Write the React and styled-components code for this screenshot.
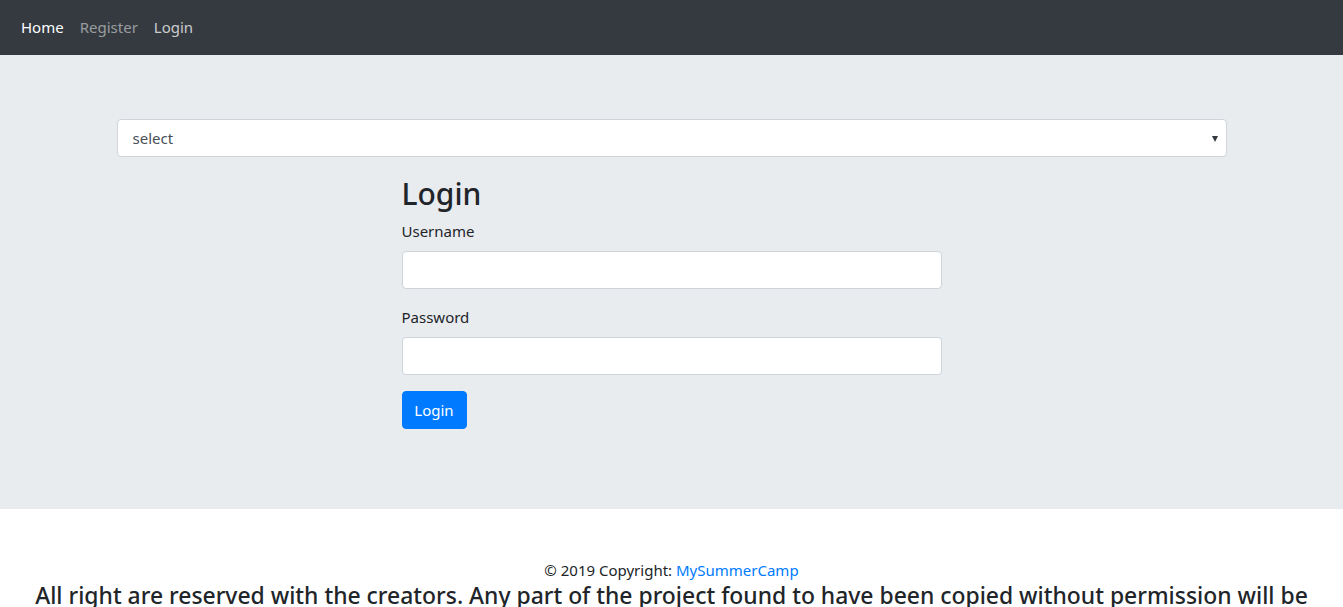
import React from "react";
import styled, { createGlobalStyle } from "styled-components";

const Global = createGlobalStyle`
  html, body { margin: 0; padding: 0; }
  body {
    font-family: "Noto Sans", "Open Sans", sans-serif;
    font-size: 15px;
    line-height: 1.5;
    color: #212529;
    background: #fff;
  }
  * { box-sizing: border-box; }
`;

const Navbar = styled.nav`
  background: #343a40;
  height: 55px;
  display: flex;
  align-items: center;
  padding: 0 13px;
`;

const NavLink = styled.a`
  padding: 0 8px;
  font-size: 15px;
  text-decoration: none;
  color: ${(p) =>
    p.$state === "active"
      ? "#fff"
      : p.$state === "hover"
      ? "rgba(255,255,255,.75)"
      : "rgba(255,255,255,.5)"};
`;

const Jumbotron = styled.section`
  background: #e9ecef;
  padding: 64px 0 80px;
`;

const Container = styled.div`
  width: 1110px;
  margin: 0 auto;
  display: flex;
  flex-direction: column;
`;

const Select = styled.div`
  height: 38px;
  background: #fff;
  border: 1px solid #ced4da;
  border-radius: 4px;
  display: flex;
  align-items: center;
  justify-content: space-between;
  padding: 1px 8px 0 15px;
  color: #495057;
  font-size: 15px;
`;

const Caret = styled.span`
  width: 0;
  height: 0;
  border-left: 3.5px solid transparent;
  border-right: 3.5px solid transparent;
  border-top: 6px solid #343a40;
`;

const FormCol = styled.form`
  width: 540px;
  margin: 19px 0 0 285px;
  display: flex;
  flex-direction: column;
`;

const Title = styled.h2`
  margin: 0 0 7px;
  font-size: 30px;
  font-weight: 500;
  line-height: 1.2;
`;

const Group = styled.div`
  display: flex;
  flex-direction: column;
  margin-bottom: 16px;
`;

const Label = styled.label`
  font-size: 15px;
  line-height: 24px;
  margin-bottom: 8px;
`;

const Input = styled.input`
  height: 38px;
  border: 1px solid #ced4da;
  border-radius: 4px;
  background: #fff;
  padding: 6px 12px;
  font: inherit;
`;

const Button = styled.button`
  align-self: flex-start;
  height: 38px;
  width: 65px;
  border: 1px solid #007bff;
  background: #007bff;
  color: #fff;
  border-radius: 4px;
  font: inherit;
  font-size: 15px;
  padding: 0;
`;

const Footer = styled.footer`
  margin-top: 32px;
  padding: 17px 0 0;
  text-align: center;
`;

const Copy = styled.div`
  font-size: 15px;
  line-height: 24px;
`;

const BrandLink = styled.a`
  color: #007bff;
  text-decoration: none;
`;

const Notice = styled.h4`
  margin: 0 auto;
  width: 1300px;
  font-size: 22.9px;
  font-weight: 500;
  line-height: 1.2;
  color: #212529;
`;

export default function App() {
  return (
    <>
      <Global />
      <Navbar>
        <NavLink $state="active" href="#">Home</NavLink>
        <NavLink href="#">Register</NavLink>
        <NavLink $state="hover" href="#">Login</NavLink>
      </Navbar>
      <Jumbotron>
        <Container>
          <Select>
            <span>select</span>
            <Caret />
          </Select>
          <FormCol onSubmit={(e) => e.preventDefault()}>
            <Title>Login</Title>
            <Group>
              <Label>Username</Label>
              <Input type="text" />
            </Group>
            <Group>
              <Label>Password</Label>
              <Input type="password" />
            </Group>
            <Button type="submit">Login</Button>
          </FormCol>
        </Container>
      </Jumbotron>
      <Footer>
        <Copy>
          © 2019 Copyright: <BrandLink href="#">MySummerCamp</BrandLink>
        </Copy>
        <Notice>
          All right are reserved with the creators. Any part of the project found to have been copied without permission will be punished as per the law.
        </Notice>
      </Footer>
    </>
  );
}
